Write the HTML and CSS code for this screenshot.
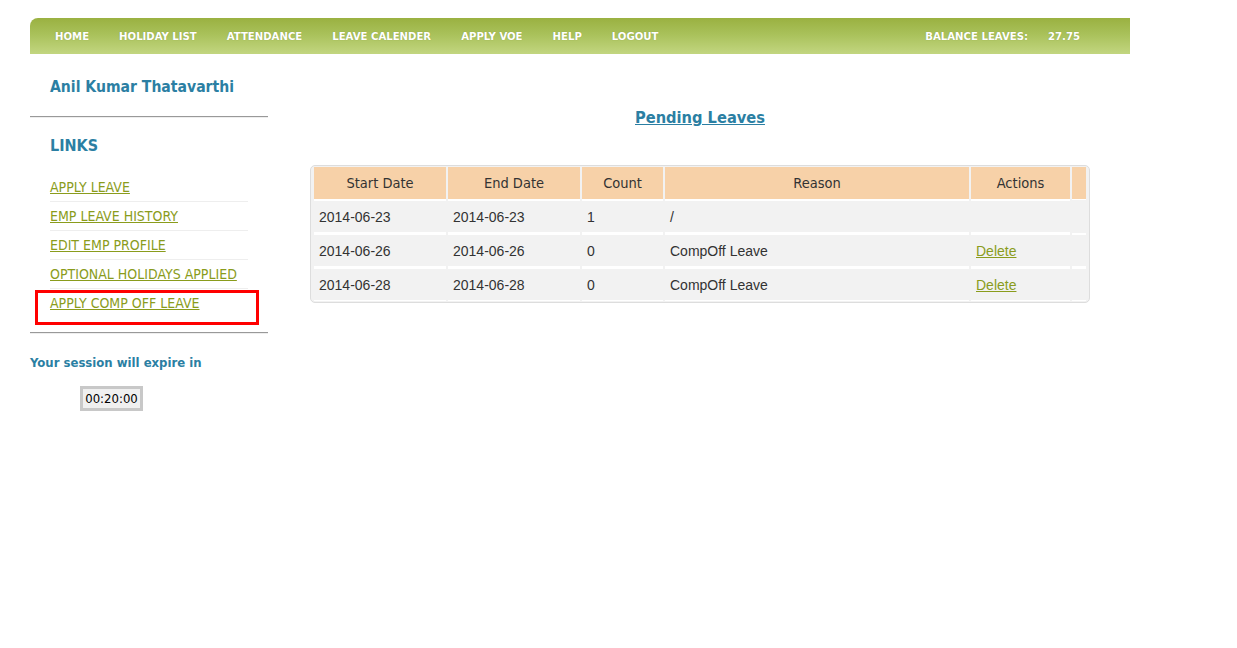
FILE: index.html
```html
<!DOCTYPE html>
<html>
<head>
<meta charset="utf-8">
<title>Pending Leaves</title>
<link rel="stylesheet" href="styles.css">
</head>
<body>
<div class="page">
  <nav class="topnav">
    <ul class="menu">
      <li><a href="#">HOME</a></li>
      <li><a href="#">HOLIDAY LIST</a></li>
      <li><a href="#">ATTENDANCE</a></li>
      <li><a href="#">LEAVE CALENDER</a></li>
      <li><a href="#">APPLY VOE</a></li>
      <li><a href="#">HELP</a></li>
      <li><a href="#">LOGOUT</a></li>
    </ul>
    <div class="balance"><span>BALANCE LEAVES:</span><span class="bal-num">27.75</span></div>
  </nav>
  <div class="content">
    <aside class="sidebar">
      <h2 class="user-name">Anil Kumar Thatavarthi</h2>
      <div class="rule first"></div>
      <h3 class="links-title">LINKS</h3>
      <ul class="links">
        <li><a href="#">APPLY LEAVE</a></li>
        <li><a href="#">EMP LEAVE HISTORY</a></li>
        <li><a href="#">EDIT EMP PROFILE</a></li>
        <li><a href="#">OPTIONAL HOLIDAYS APPLIED</a></li>
        <li class="marked"><a href="#">APPLY COMP OFF LEAVE</a><span class="highlight"></span></li>
      </ul>
      <div class="rule"></div>
      <p class="session">Your session will expire in</p>
      <div class="timer">00:20:00</div>
    </aside>
    <main class="main">
      <h1 class="title"><a href="#">Pending Leaves</a></h1>
      <div class="table-wrap">
        <table class="leaves">
          <thead>
            <tr>
              <th class="c1">Start Date</th>
              <th class="c2">End Date</th>
              <th class="c3">Count</th>
              <th class="c4">Reason</th>
              <th class="c5">Actions</th>
              <th class="c6"></th>
            </tr>
          </thead>
          <tbody>
            <tr>
              <td>2014-06-23</td><td>2014-06-23</td><td>1</td><td>/</td><td></td><td class="blank"></td>
            </tr>
            <tr>
              <td>2014-06-26</td><td>2014-06-26</td><td>0</td><td>CompOff Leave</td><td><a href="#">Delete</a></td><td class="blank"></td>
            </tr>
            <tr>
              <td>2014-06-28</td><td>2014-06-28</td><td>0</td><td>CompOff Leave</td><td><a href="#">Delete</a></td><td class="blank"></td>
            </tr>
          </tbody>
        </table>
      </div>
    </main>
  </div>
</div>
</body>
</html>
```

FILE: styles.css
```css
html, body {
  margin: 0;
  padding: 0;
  background: #fff;
}
body {
  font-family: "DejaVu Sans Condensed", "DejaVu Sans", sans-serif;
  color: #333;
}
.page {
  width: 1100px;
  padding: 18px 0 0 30px;
}
.topnav {
  height: 36px;
  display: flex;
  align-items: center;
  justify-content: space-between;
  background: linear-gradient(to bottom, #9ab141 0%, #a9c15a 45%, #c2d680 100%);
  border-top-left-radius: 8px;
  padding: 1px 50px 0 10px;
  box-sizing: border-box;
}
.menu {
  list-style: none;
  margin: 0;
  padding: 0;
  display: flex;
}
.menu a, .balance {
  color: #fff;
  font-weight: bold;
  font-size: 11.25px;
  text-decoration: none;
  text-shadow: 0 0 1px rgba(80,100,20,0.4);
}
.menu a {
  display: block;
  padding: 0 15px;
}
.balance {
  display: flex;
  gap: 20px;
}
.content {
  display: flex;
  gap: 42px;
}
.sidebar {
  width: 238px;
  flex: none;
}
.user-name {
  margin: 23px 0 0 20px;
  font-size: 15.6px;
  line-height: 20px;
  font-weight: bold;
  color: #2b7fa3;
}
.rule {
  border-top: 1px solid #999;
  border-bottom: 1px solid #eee;
  margin-top: 20px;
}
.rule.first {
  margin-top: 19px;
}
.links-title {
  margin: 18px 0 0 20px;
  font-size: 16px;
  line-height: 20px;
  color: #2b7fa3;
}
.links {
  list-style: none;
  margin: 17px 0 0 20px;
  padding: 0;
  width: 198px;
}
.links li {
  position: relative;
  height: 28px;
  line-height: 28px;
  border-bottom: 1px solid #eee;
}
.links li.marked {
  border-bottom: none;
}
.links a {
  font-size: 14px;
  color: #8a9c1c;
  text-decoration: underline;
}
.highlight {
  position: absolute;
  left: -15px;
  top: 1px;
  width: 218px;
  height: 29px;
  border: 3px solid #f00;
}
.links + .rule {
  margin-top: 15px;
}
.session {
  margin: 20px 0 0 0;
  font-size: 13px;
  line-height: 18px;
  font-weight: bold;
  color: #2b7fa3;
}
.timer {
  margin: 14px 0 0 50px;
  width: 57px;
  height: 19px;
  border: 3px solid #c8c8c8;
  background: #f0f0f0;
  color: #000;
  font-size: 13px;
  line-height: 19px;
  text-align: center;
}
.main {
  width: 780px;
  flex: none;
}
.title {
  margin: 53px 0 0 0;
  text-align: center;
  font-size: 16.3px;
  line-height: 22px;
  font-weight: bold;
}
.title a {
  color: #2b7fa3;
  text-decoration: underline;
}
.table-wrap {
  margin-top: 36px;
  border: 1px solid #ddd;
  border-radius: 5px;
  background: #f2f2f2;
  padding: 1px;
}
.leaves {
  width: 100%;
  border-collapse: separate;
  border-spacing: 2px 0;
  table-layout: fixed;
}
.leaves th {
  background: #f7d1a8;
  font-weight: normal;
  font-size: 14.5px;
  color: #333;
  height: 32px;
  padding: 0;
  border-bottom: 1px solid #fff;
}
.leaves .c1 { width: 132px; }
.leaves .c2 { width: 132px; }
.leaves .c3 { width: 81px; }
.leaves .c4 { width: 304px; }
.leaves .c5 { width: 99px; }
.leaves .c6 { width: 14px; }
.leaves td {
  font-family: "Liberation Sans", Arial, sans-serif;
  font-size: 14px;
  color: #333;
  height: 31px;
  padding: 0 5px;
  border-top: 1px solid #fff;
  border-bottom: 1px solid #fff;
  background: #f2f2f2;
}
.leaves tbody tr + tr td {
  border-top: 2px solid #fff;
}
.leaves td.blank {
  padding: 0;
}
.leaves tbody tr:first-child td.blank {
  border-color: #f2f2f2;
}
.leaves td a {
  color: #8a9c1c;
  text-decoration: underline;
}
```
